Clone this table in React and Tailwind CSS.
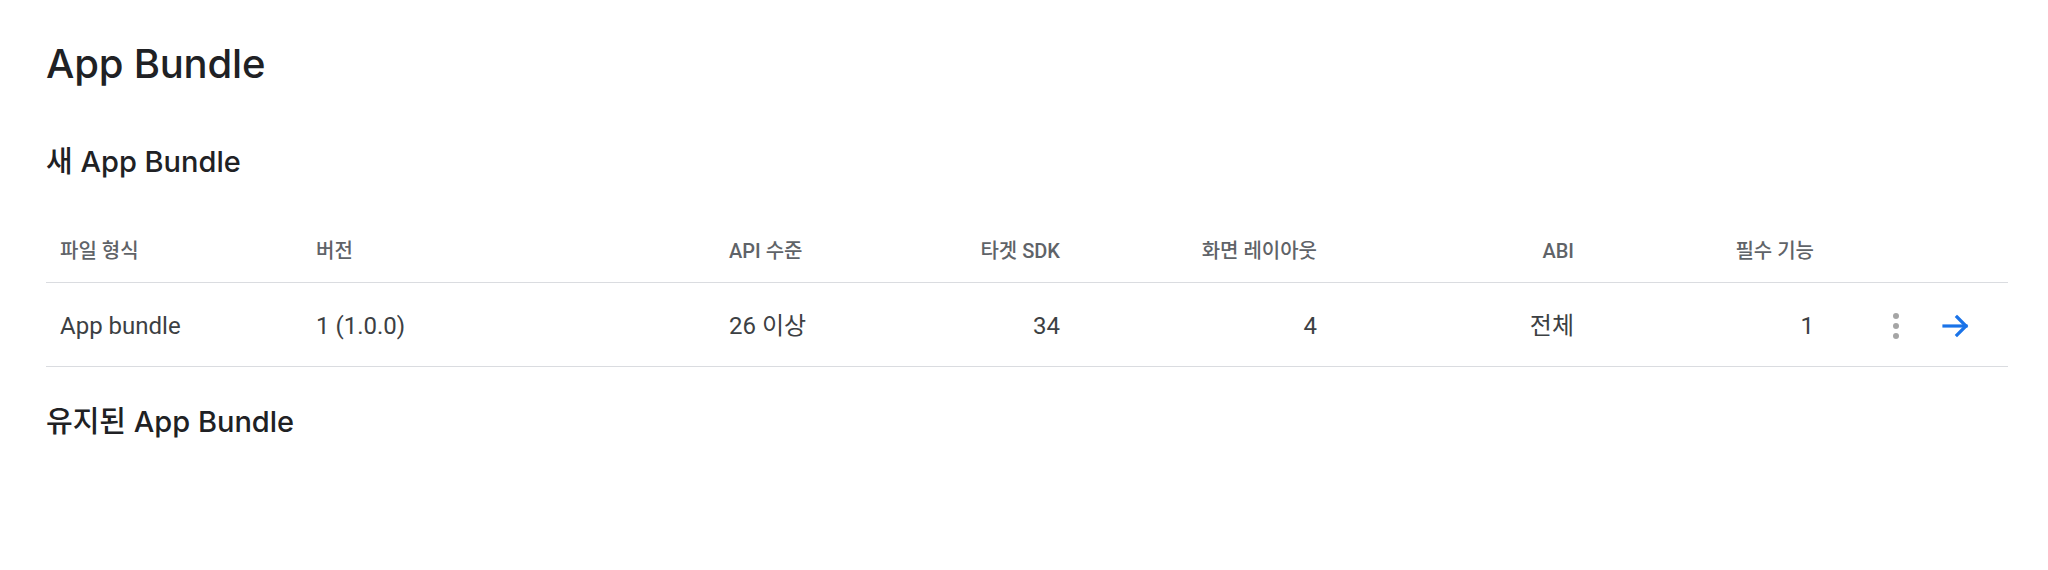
import React from 'react'

const heading = { fontFamily: 'Inter, "Noto Sans CJK KR", sans-serif' }
const body = { fontFamily: 'Roboto, "Noto Sans CJK KR", sans-serif' }

const columns = [
  { label: '파일 형식', value: 'App bundle', align: 'left' },
  { label: '버전', value: '1 (1.0.0)', align: 'left' },
  { label: 'API 수준', value: '26 이상', align: 'left' },
  { label: '타겟 SDK', value: '34', align: 'right' },
  { label: '화면 레이아웃', value: '4', align: 'right' },
  { label: 'ABI', value: '전체', align: 'right' },
  { label: '필수 기능', value: '1', align: 'right' },
]

const MoreIcon = () => (
  <svg width="12" height="30" viewBox="0 0 12 30" fill="#a5a5a5">
    <circle cx="6" cy="5" r="3" />
    <circle cx="6" cy="15" r="3" />
    <circle cx="6" cy="25" r="3" />
  </svg>
)

const ArrowIcon = () => (
  <svg width="30" height="24" viewBox="0 0 30 24" fill="none" stroke="#1a73e8" strokeWidth="3.2" strokeLinecap="square">
    <path d="M3 12h22" />
    <path d="M16 3l9 9-9 9" />
  </svg>
)

const App = () => {
  return (
    <div className="w-[2048px] h-[570px] bg-white pl-[46px] pr-[40px] pt-10 text-[#202124]">
      <h1 className="text-[40px] leading-[48px] font-medium tracking-[-0.2px]" style={heading}>
        App Bundle
      </h1>
      <h2 className="mt-[55px] text-[29px] leading-[37px] font-medium" style={heading}>
        새 App Bundle
      </h2>

      <div className="mt-[40px] grid grid-cols-[256px_413px_185px_174px_257px_257px_240px_1fr]" style={body}>
        {columns.map((c) => (
          <div
            key={c.label}
            className={
              c.align === 'right'
                ? 'h-[63px] flex items-center justify-end px-[14px] text-[20px] font-medium text-[#5f6368] border-b border-[#dadce0]'
                : 'h-[63px] flex items-center px-[14px] text-[20px] font-medium text-[#5f6368] border-b border-[#dadce0]'
            }
          >
            {c.label}
          </div>
        ))}
        <div className="h-[63px] border-b border-[#dadce0]" />

        {columns.map((c) => (
          <div
            key={c.value + c.label}
            className={
              c.align === 'right'
                ? 'h-[84px] flex items-center justify-end px-[14px] pt-[2px] text-[24px] text-[#3c4043] border-b border-[#dadce0]'
                : 'h-[84px] flex items-center px-[14px] pt-[2px] text-[24px] text-[#3c4043] border-b border-[#dadce0]'
            }
          >
            {c.value}
          </div>
        ))}
        <div className="h-[84px] flex items-center pl-[62px] pt-[2px] border-b border-[#dadce0]">
          <MoreIcon />
          <span className="ml-[39px] flex items-center">
            <ArrowIcon />
          </span>
        </div>
      </div>

      <h2 className="mt-[36px] text-[29px] leading-[37px] font-medium" style={heading}>
        유지된 App Bundle
      </h2>
    </div>
  )
}

export default App
